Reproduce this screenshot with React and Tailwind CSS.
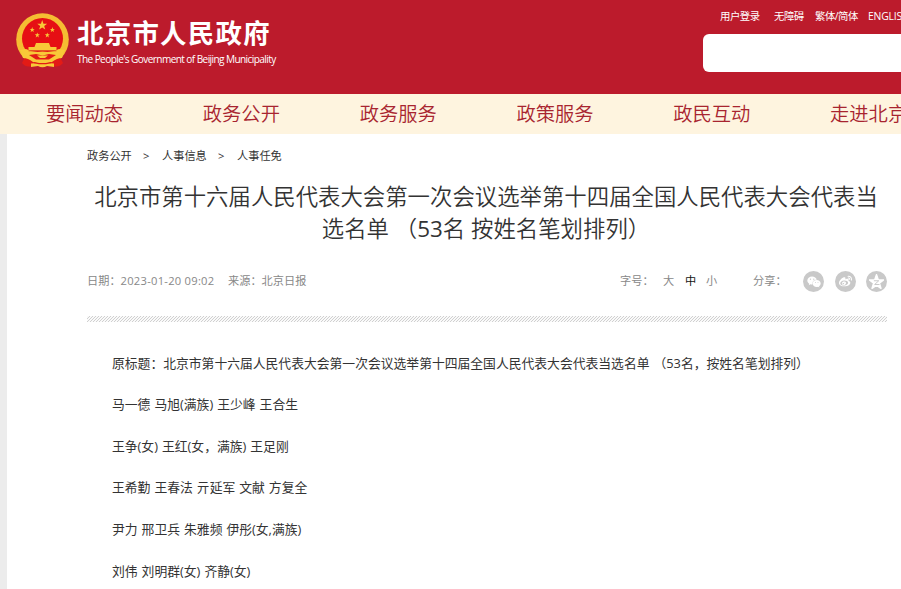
import { FaWeixin, FaWeibo } from "react-icons/fa";

const navItems = ["要闻动态", "政务公开", "政务服务", "政策服务", "政民互动", "走进北京"];

const paragraphs = [
  "原标题：北京市第十六届人民代表大会第一次会议选举第十四届全国人民代表大会代表当选名单 （53名，按姓名笔划排列）",
  "马一德 马旭(满族) 王少峰 王合生",
  "王争(女) 王红(女，满族) 王足刚",
  "王希勤 王春法 亓延军 文献 方复全",
  "尹力 邢卫兵 朱雅频 伊彤(女,满族)",
  "刘伟 刘明群(女) 齐静(女)",
];

const STAR = "M0,-10 L2.4,-3.1 L9.5,-3.1 L3.8,1.2 L5.9,8.1 L0,4 L-5.9,8.1 L-3.8,1.2 L-9.5,-3.1 L-2.4,-3.1 Z";

function Emblem() {
  return (
    <svg className="h-[56px] w-[54px] shrink-0" viewBox="0 0 54 56">
      <circle cx="26.5" cy="26.5" r="26.3" fill="#f5bd32" />
      <circle cx="26.5" cy="25.5" r="20.5" fill="#e60f14" />
      <path d="M9 44 L44 44 L47 50 Q43 55 37 53 L16 53 Q10 55 6 50 Z" fill="#e31b16" />
      <g fill="#f8c938">
        <path d={STAR} transform="translate(26.2 12.3) scale(.52)" />
        <path d={STAR} transform="translate(16.2 16.8) scale(.27)" />
        <path d={STAR} transform="translate(36.4 16.8) scale(.27)" />
        <path d={STAR} transform="translate(21.3 22.2) scale(.27)" />
        <path d={STAR} transform="translate(31.3 22.2) scale(.27)" />
        <path d="M20 30 h13 l1.5 4 h6 v3.5 H12.5 v-3.5 h6 Z" />
        <path d="M4 37 L10 36 Q17 40 26.5 38.5 Q36 40 43 36 L49 37 L46 45 Q41 45 36 49 L30 50.5 H23 L17 49 Q12 45 7 45 Z" />
        <path d="M15 50.5 L22 50 Q26.5 48 31 50 L38 50.5 V54 L31 53 Q26.5 55.5 22 53 L15 54 Z" />
      </g>
      <path d="M12.5 37.8 H40.5" stroke="#e0491f" strokeWidth=".9" />
      <path d="M13 42 L20 41 L26.5 42.5 L33 41 L40 42 L33 46.5 H20 Z" fill="#e31b16" />
      <path d="M21 42.5 H32 L29 45 H24 Z" fill="#f8c938" />
      <path d="M18 49.7 L23 50.7 H30 L35 49.7" fill="none" stroke="#e31b16" strokeWidth="1.2" />
    </svg>
  );
}

function QzoneIcon() {
  return (
    <svg className="h-[15px] w-[15px]" viewBox="-10 -11 20 20">
      <path d={STAR} fill="#fff" stroke="#fff" strokeWidth="2" strokeLinejoin="round" />
      <path d="M-3.5 -2 H3 L-2.5 3 H4" fill="none" stroke="#c9c9c9" strokeWidth="1.3" />
    </svg>
  );
}

function ShareButton({ children }) {
  return (
    <span className="flex size-[21px] items-center justify-center rounded-full bg-[#c9c9c9] text-white">
      {children}
    </span>
  );
}

function Header() {
  return (
    <header className="flex h-[94px] justify-between bg-[#bc1b2c] text-white">
      <div className="flex pt-[13px] pl-[16px]">
        <Emblem />
        <div className="ml-[7px] pt-[4px] whitespace-nowrap">
          <h1 className="h-[32px] text-[26.4px] leading-[32px] font-bold tracking-[1.3px]">北京市人民政府</h1>
          <p className="mt-[3px] text-[10.1px] leading-[14px] tracking-[-0.6px]">
            The People's Government of Beijing Municipality
          </p>
        </div>
      </div>
      <div className="w-[198px] overflow-hidden">
        <div className="flex h-[34px] pt-[8px] pl-[17px] text-[10.4px] leading-[17px] tracking-[-0.5px] whitespace-nowrap">
          <a className="w-[54px] shrink-0">用户登录</a>
          <a className="w-[41px] shrink-0">无障碍</a>
          <a className="w-[53px] shrink-0">繁体/简体</a>
          <a className="shrink-0 tracking-[-0.2px]">ENGLISH</a>
        </div>
        <div className="h-[38px] w-[240px] rounded-[6px] bg-white" />
      </div>
    </header>
  );
}

function MetaBar() {
  return (
    <div className="flex h-[22px] items-center text-[11.2px] whitespace-nowrap text-[#888]">
      <span className="w-[141px] pb-px">
        日期：<span className="tracking-[0.25px]">2023-01-20 09:02</span>
      </span>
      <span className="w-[392px] pb-px">来源：北京日报</span>
      <span className="w-[43px] pb-px">字号：</span>
      <span className="w-[22px] pb-px">大</span>
      <span className="w-[21px] pb-px text-[#111]">中</span>
      <span className="w-[47px] pb-px">小</span>
      <span className="w-[50px] pb-px">分享：</span>
      <div className="-mt-px flex gap-[10.5px]">
        <ShareButton>
          <FaWeixin size={14} />
        </ShareButton>
        <ShareButton>
          <FaWeibo size={13} />
        </ShareButton>
        <ShareButton>
          <QzoneIcon />
        </ShareButton>
      </div>
    </div>
  );
}

export default function App() {
  return (
    <div className="h-[589px] w-[901px] overflow-hidden bg-white font-['Open_Sans','Noto_Sans_CJK_SC',sans-serif]">
      <Header />
      <nav className="flex h-[40px] gap-[79.7px] overflow-hidden bg-[#fef4df] pl-[46px] text-[19.3px] leading-[40px] whitespace-nowrap text-[#a8242f]">
        {navItems.map((item) => (
          <a key={item} className="shrink-0 font-[350]">
            {item}
          </a>
        ))}
      </nav>
      <main className="h-[455px] border-l-[7px] border-[#ececec] pt-[13px] pl-[80px] text-[#333]">
        <div className="flex h-[18px] text-[11.2px] leading-[18px] whitespace-nowrap">
          <span className="w-[56px]">政务公开</span>
          <span className="w-[19px]">&gt;</span>
          <span className="w-[56px]">人事信息</span>
          <span className="w-[19px]">&gt;</span>
          <span>人事任免</span>
        </div>
        <h2 className="mt-[16px] w-[798px] text-center text-[22.4px] leading-[32px] font-[350] whitespace-nowrap">
          北京市第十六届人民代表大会第一次会议选举第十四届全国人民代表大会代表当
          <br />
          选名单 （<span className="font-normal">53</span>名 按姓名笔划排列）
        </h2>
        <div className="mt-[26px]">
          <MetaBar />
        </div>
        <div className="mt-[23px] h-[6px] w-[800px] bg-[linear-gradient(135deg,#fafafa_38%,#d0d0d0_38%,#d0d0d0_62%,#fafafa_62%)] bg-[length:3px_3px]" />
        <article className="mt-[20.6px] pl-[25px] text-[12.8px] leading-[41.6px] [word-spacing:0.7px] whitespace-nowrap">
          {paragraphs.map((text) => (
            <p key={text}>{text}</p>
          ))}
        </article>
      </main>
    </div>
  );
}
